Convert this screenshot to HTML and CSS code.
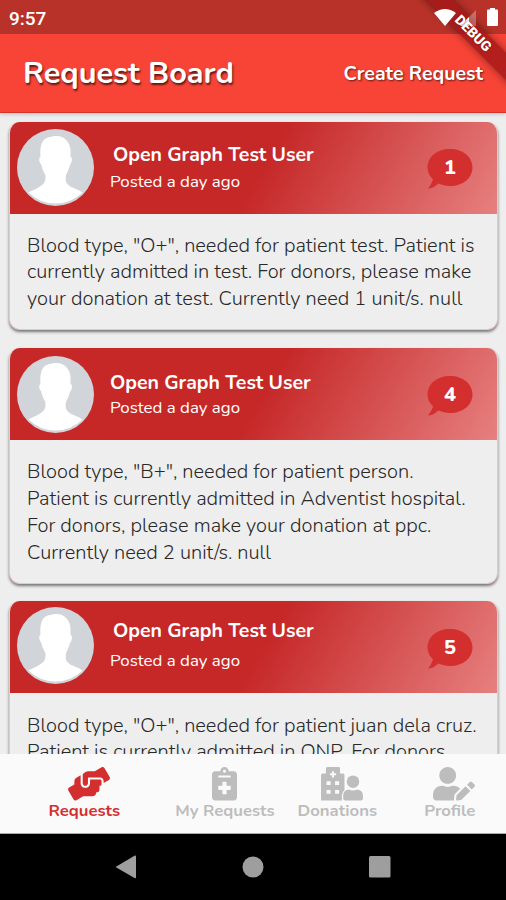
FILE: index.html
```html
<!DOCTYPE html>
<html lang="en">
<head>
    <meta charset="UTF-8">
    <meta name="viewport" content="width=device-width, initial-scale=1.0">
    <title>Request Board</title>
    <link rel="stylesheet" href="styles.css">
</head>
<body>
    <svg class="defs" width="0" height="0">
        <symbol id="avatar" viewBox="0 0 77 77">
            <circle cx="38.5" cy="38.5" r="38.5" fill="#d1d5da"/>
            <path d="M38 7C46 6 53 12 53.500 21L53.500 28C55.500 28 55.500 33 53 36C52 40 50.500 43 49 46C48 52 49 55 54 58C60 60.500 62 61 65.500 63.500A38.500 38.500 0 0 1 11.500 63.500C16 61 22 59 25 56C29 53 28.500 49 28.500 46C26 42 25 39 24 35C21.500 33 22 28 23.500 28C22.500 17 25 8 34 8C35 7 37 7 38 7Z" fill="#fff"/>
        </symbol>
        <symbol id="bubble" viewBox="0 0 46 40">
            <path d="M23 0C36 0 45.500 8 45.500 18.500S36 37 23 37C19 37 15 36 11.500 34.500C8 37.500 4.500 39.500 1 39.500C3 37 5 33.500 6 30.500C2.500 27 .5 23 .5 18.500C.5 8 10 0 23 0Z" fill="#d32f2f"/>
        </symbol>
    </svg>

    <div class="status-bar">
        <span>9:57</span>
        <svg width="68" height="24" viewBox="0 0 68 24" fill="#fff">
            <path d="M0 6Q11 -2 22 6L11 19Z"/>
            <path d="M42 3V19H26Z" opacity=".3"/>
            <path d="M35 10V19H26Z"/>
            <path d="M56 2.500V1H61V2.500H63Q64 2.500 64 3.500V18Q64 19 63 19H54Q53 19 53 18V3.500Q53 2.500 54 2.500Z"/>
        </svg>
    </div>
    <div class="debug-corner"><div class="debug"></div></div>
    <div class="debug-corner label"><div class="debug">DEBUG</div></div>

    <div class="app-bar">
        <h1>Request Board</h1>
        <a class="create">Create Request</a>
    </div>

    <div class="list">
        <div class="card">
            <div class="card-header">
                <svg class="avatar"><use href="#avatar"/></svg>
                <div class="user">
                    <div class="name">Open Graph Test User</div>
                    <div class="posted">Posted a day ago</div>
                </div>
                <div class="count"><svg><use href="#bubble"/></svg><span>1</span></div>
            </div>
            <div class="card-body">
                <p>Blood type, "O+", needed for patient test. Patient is</p>
                <p>currently admitted in test. For donors, please make</p>
                <p>your donation at test. Currently need 1 unit/s. null</p>
            </div>
        </div>

        <div class="card second">
            <div class="card-header">
                <svg class="avatar"><use href="#avatar"/></svg>
                <div class="user">
                    <div class="name">Open Graph Test User</div>
                    <div class="posted">Posted a day ago</div>
                </div>
                <div class="count"><svg><use href="#bubble"/></svg><span>4</span></div>
            </div>
            <div class="card-body">
                <p>Blood type, "B+", needed for patient person.</p>
                <p>Patient is currently admitted in Adventist hospital.</p>
                <p>For donors, please make your donation at ppc.</p>
                <p>Currently need 2 unit/s. null</p>
            </div>
        </div>

        <div class="card third">
            <div class="card-header">
                <svg class="avatar"><use href="#avatar"/></svg>
                <div class="user">
                    <div class="name">Open Graph Test User</div>
                    <div class="posted">Posted a day ago</div>
                </div>
                <div class="count"><svg><use href="#bubble"/></svg><span>5</span></div>
            </div>
            <div class="card-body">
                <p>Blood type, "O+", needed for patient juan dela cruz.</p>
                <p>Patient is currently admitted in ONP. For donors,</p>
            </div>
        </div>
    </div>

    <div class="tabs">
        <div class="tab active">
            <svg viewBox="0 0 640 512"><path d="M488 192H336v56c0 39.700-32.300 72-72 72s-72-32.300-72-72V126.400l-64.900 39C107.800 176.900 96 197.800 96 220.200v47.300l-80 46.200C.7 322.500-4.600 342.100 4.300 357.400l80 138.600c8.800 15.300 28.400 20.500 43.700 11.700L231.400 448H368c35.300 0 64-28.700 64-64h16c17.700 0 32-14.300 32-32v-64h8c13.300 0 24-10.700 24-24v-48c0-13.300-10.700-24-24-24zm147.700-37.400L555.700 16C546.900.7 527.300-4.500 512 4.300L408.600 64H306.400c-12 0-23.700 3.400-33.900 9.700L239 94.600c-9.400 5.800-15 16.100-15 27.100V248c0 22.100 17.900 40 40 40s40-17.900 40-40v-88h184c30.900 0 56 25.100 56 56v28.500l80-46.200c15.300-8.900 20.500-28.400 11.700-43.700z"/></svg>
            <span>Requests</span>
        </div>
        <div class="tab">
            <svg class="narrow" viewBox="0 0 384 512"><path fill-rule="evenodd" d="M336 64h-80c0-35.300-28.700-64-64-64s-64 28.700-64 64H48C21.500 64 0 85.500 0 112v352c0 26.500 21.500 48 48 48h288c26.500 0 48-21.500 48-48V112c0-26.500-21.500-48-48-48zM192 40c13.300 0 24 10.700 24 24s-10.700 24-24 24-24-10.700-24-24 10.700-24 24-24zM288 344c0 4.400-3.600 8-8 8h-56v56c0 4.400-3.600 8-8 8h-48c-4.400 0-8-3.600-8-8v-56h-56c-4.400 0-8-3.600-8-8v-48c0-4.400 3.600-8 8-8h56v-56c0-4.400 3.600-8 8-8h48c4.400 0 8 3.600 8 8v56h56c4.400 0 8 3.600 8 8zM288 152c0 4.400-3.600 8-8 8H104c-4.400 0-8-3.600-8-8v-16c0-4.400 3.600-8 8-8h176c4.400 0 8 3.600 8 8z"/></svg>
            <span>My Requests</span>
        </div>
        <div class="tab">
            <svg viewBox="0 0 640 512"><path fill-rule="evenodd" d="M96 0H270Q290 0 290 20V100H336Q358 104 358 125V350Q318 385 318 430V512H0V125Q0 102 24 100H75V20Q78 0 96 0ZM168 65V97H136V127H168V160H198V127H230V97H198V65ZM84 218V276H146V218ZM214 218V276H276V218ZM84 352V410H146V352ZM214 352V410H276V352Z"/><circle cx="488" cy="224" r="96"/><path d="M420 344Q488 374 556 344Q640 354 640 440V480Q640 512 608 512H368Q338 512 338 480V440Q338 354 420 344Z"/></svg>
            <span>Donations</span>
        </div>
        <div class="tab">
            <svg viewBox="0 0 640 512"><path d="M224 256c70.700 0 128-57.300 128-128S294.700 0 224 0 96 57.300 96 128s57.300 128 128 128zm89.600 32h-16.700c-22.200 10.200-46.900 16-72.900 16s-50.600-5.800-72.900-16h-16.700C60.200 288 0 348.200 0 422.400V464c0 26.500 21.500 48 48 48h274.900c-2.400-6.800-3.400-14-2.600-21.300l6.800-60.900 1.200-11.100 7.900-7.900 77.300-77.300c-24.500-27.700-60-45.500-99.900-45.500zm45.300 145.300l-6.800 61c-1.100 10.200 7.500 18.800 17.600 17.600l60.900-6.800 137.900-137.900-71.700-71.700-137.900 137.800zM633 268.900L595.100 231c-9.300-9.300-24.500-9.300-33.800 0l-37.800 37.800-4.100 4.100 71.800 71.700 41.800-41.800c9.300-9.400 9.300-24.500 0-33.900z"/></svg>
            <span>Profile</span>
        </div>
    </div>

    <div class="system-nav">
        <svg width="22" height="24" viewBox="0 0 22 24"><path d="M0.500 12L19.500 .8Q21 0 21 2V22Q21 24 19.500 23Z"/></svg>
        <svg width="22" height="22" viewBox="0 0 22 22"><circle cx="11" cy="11" r="10.500"/></svg>
        <svg width="22" height="22" viewBox="0 0 22 22"><rect width="21.500" height="21.500" rx="1.500"/></svg>
    </div>
</body>
</html>
```
FILE: styles.css
```css
* {
    box-sizing: border-box;
}

body {
    margin: 0;
    width: 506px;
    height: 900px;
    display: flex;
    flex-direction: column;
    overflow: hidden;
    position: relative;
    background: #eee;
    font-family: Nunito, Lato, "Noto Sans", sans-serif;
}

.defs {
    position: absolute;
}

.status-bar {
    height: 34px;
    flex: none;
    padding: 3px 4px 0 9px;
    display: flex;
    align-items: center;
    justify-content: space-between;
    background: #b93229;
    color: #fff;
    font: 500 19px/34px Roboto, sans-serif;
}

.status-bar svg {
    position: relative;
    z-index: 3;
}

.debug-corner {
    position: absolute;
    top: 0;
    right: 0;
    width: 90px;
    height: 90px;
    overflow: hidden;
    z-index: 2;
}

.debug {
    position: absolute;
    top: 24px;
    left: -8px;
    width: 130px;
    height: 19px;
    transform: rotate(45deg);
    background: rgba(160, 22, 22, 0.8);
    box-shadow: 0 0 8px rgba(0, 0, 0, 0.45);
    color: #fff;
    font: 900 14px/19px Roboto, sans-serif;
    text-align: center;
}

.label {
    z-index: 4;
}

.label .debug {
    background: none;
    box-shadow: none;
    text-shadow: 0 0 2px rgba(90, 0, 0, 0.7);
}

.app-bar {
    height: 79px;
    flex: none;
    padding: 0 23px;
    display: flex;
    align-items: center;
    justify-content: space-between;
    background: #f84436;
    border-bottom: 1px solid #d5342a;
    box-shadow: 0 1px 4px rgba(80, 120, 130, 0.4);
    color: #fff;
    z-index: 1;
}

h1 {
    margin: 0;
    font-size: 30.700px;
    font-weight: bold;
    text-shadow: 1px 2px 2px rgba(0, 0, 0, 0.65);
}

.create {
    padding-top: 1px;
    font-size: 19.500px;
    font-weight: bold;
    text-shadow: 1px 1px 2px rgba(0, 0, 0, 0.6);
}

.list {
    flex: 1;
    min-height: 0;
    overflow: hidden;
    padding: 9px 8px 0 9px;
}

.card {
    border-radius: 11px;
    overflow: hidden;
    margin-bottom: 17px;
    border: 1px solid #eac6c9;
    border-top: none;
    background: #eee;
    box-shadow: 0 2px 3px rgba(0, 0, 0, 0.5);
}

.card-header {
    height: 92px;
    margin: 0 -1px;
    display: flex;
    padding: 7px 25px 0 8px;
    background: linear-gradient(120deg, #c62828 52%, #e78080 100%);
    color: #fff;
}

.avatar {
    width: 77px;
    height: 77px;
    flex: none;
}

.user {
    flex: 1;
    padding: 14px 0 0 16px;
}

.name {
    margin-left: 3px;
    font-size: 19.500px;
    font-weight: bold;
    line-height: 24px;
    white-space: nowrap;
}

.posted {
    margin-top: 4px;
    font-size: 16.900px;
    line-height: 22px;
}

.count {
    width: 46px;
    height: 40px;
    margin-top: 20px;
    display: grid;
}

.count svg,
.count span {
    grid-area: 1 / 1;
    width: 46px;
    height: 40px;
}

.count span {
    font-size: 20px;
    font-weight: 800;
    line-height: 38px;
    text-align: center;
}

.second .card-header {
    padding-top: 8px;
}

.second .user {
    padding-top: 15px;
}

.second .name {
    margin-left: 0;
}

.second .posted {
    margin-top: 2px;
}

.third .card-header {
    padding-top: 6px;
}

.third .user {
    padding-top: 12px;
}

.third .posted {
    margin-top: 7px;
}

.third .count {
    margin-top: 22px;
}

.card-body {
    padding: 18.500px 17px 16.500px;
    color: #282828;
    font-size: 20px;
    font-weight: 300;
    line-height: 26.800px;
}

.card-body p {
    margin: 0;
    white-space: nowrap;
}

.second .card-body {
    padding-top: 19px;
}

.third .card-body {
    padding-top: 19.500px;
}

.second {
    margin-top: 18px;
}

.tabs {
    height: 80px;
    flex: none;
    padding-top: 13px;
    display: grid;
    grid-template-columns: 1.5fr 1fr 1fr 1fr;
    background: #fafafa;
    border-bottom: 1px solid #aaa;
    z-index: 1;
}

.tab {
    display: flex;
    flex-direction: column;
    align-items: center;
    color: #bdbdbd;
    font-size: 16.700px;
    font-weight: bold;
    line-height: 20px;
    white-space: nowrap;
}

.tab.active {
    color: #d32f2f;
}

/* wide glyphs keep a square slot and run over its right edge */
.tab svg {
    width: 42px;
    height: 33.500px;
    margin-right: -8.500px;
    fill: currentColor;
}

.tab svg.narrow {
    width: 25px;
    margin-right: 0;
}

.system-nav {
    height: 66px;
    flex: none;
    padding: 0 115px;
    display: flex;
    align-items: center;
    justify-content: space-between;
    background: #000;
    fill: #9e9e9e;
}
```
